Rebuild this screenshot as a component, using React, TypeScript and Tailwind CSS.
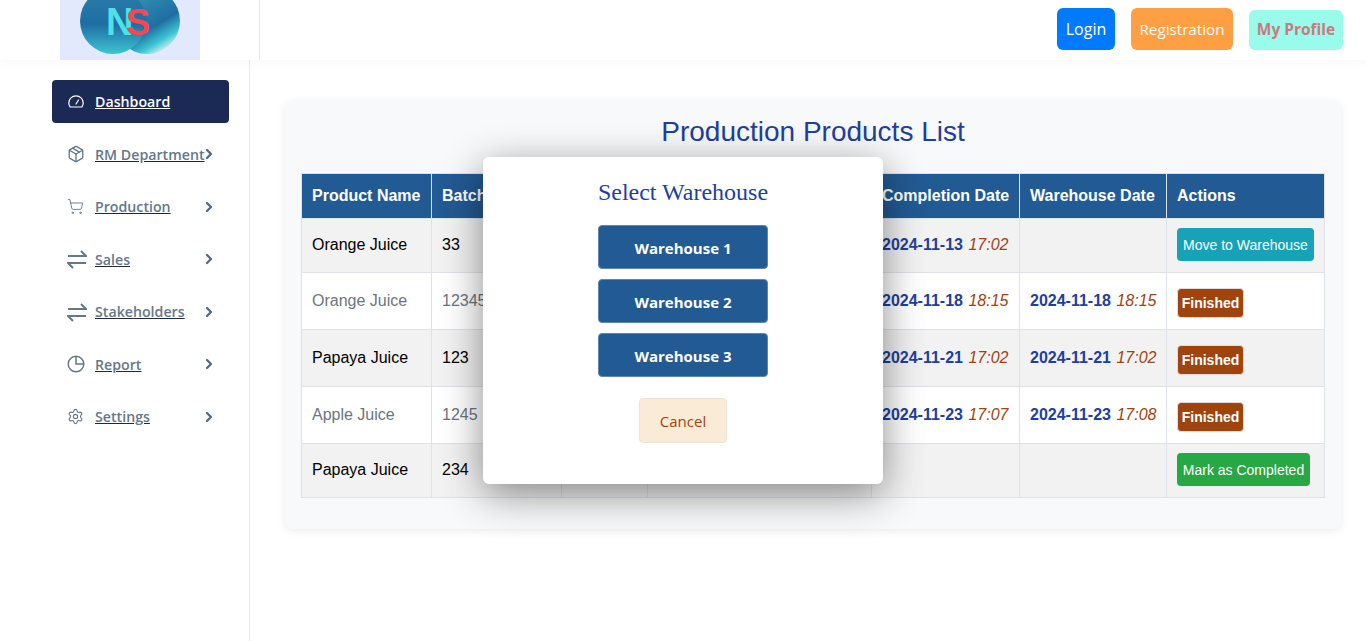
import React from "react";
import { Package, Settings, ShoppingCart, ChevronRight } from "lucide-react";

const Gauge = () => (
  <svg width="16" height="16" viewBox="0 0 16 16" fill="none" stroke="currentColor" strokeWidth="1.2">
    <path d="M2.2 13h11.6c.9-1.1 1.4-2.5 1.4-4a7.2 7.2 0 0 0-14.4 0c0 1.500.5 2.900 1.400 4z" />
    <path d="M8 10l2.500-4" strokeLinecap="round" />
  </svg>
);

const Harpoons = () => (
  <svg width="20" height="20" viewBox="0 0 20 20" fill="none" stroke="currentColor" strokeWidth="2">
    <path d="M1 7h18l-5-5" />
    <path d="M19 14H1l5 5" />
  </svg>
);

const PieClock = () => (
  <svg width="18" height="18" viewBox="0 0 18 18" fill="none" stroke="currentColor" strokeWidth="1.500">
    <circle cx="9" cy="9" r="7.800" />
    <path d="M9 1.200V9h7.800" />
  </svg>
);

const Logo = () => (
  <svg width="140" height="60" viewBox="0 0 140 60">
    <defs>
      <linearGradient id="leftDisc" x1="0" y1="0" x2="0" y2="1">
        <stop offset="0" stopColor="#2a7ea8" />
        <stop offset="0.55" stopColor="#1f6ea3" />
        <stop offset="1" stopColor="#3cc4d2" />
      </linearGradient>
      <linearGradient id="rightDisc" x1="0.1" y1="0" x2="0.7" y2="1">
        <stop offset="0" stopColor="#3aa0b8" />
        <stop offset="0.65" stopColor="#1f6ea3" />
        <stop offset="0.85" stopColor="#3cc4d2" />
        <stop offset="1" stopColor="#dff2f5" />
      </linearGradient>
    </defs>
    <rect width="140" height="60" fill="#e3e9fd" />
    <circle cx="87" cy="21" r="33" fill="url(#rightDisc)" />
    <circle cx="53" cy="21" r="33" fill="url(#leftDisc)" />
    <text y="35" fontFamily="'Liberation Sans', sans-serif" fontWeight="700" fontSize="38">
      <tspan x="46" fill="#50e0e6">N</tspan>
      <tspan x="66" fontSize="36" fill="#f9474f">S</tspan>
    </text>
  </svg>
);

const navItems = [
  { label: "RM Department", icon: <Package size={18} strokeWidth={1.800} /> },
  { label: "Production", icon: <ShoppingCart size={17} strokeWidth={1.300} /> },
  { label: "Sales", icon: <Harpoons /> },
  { label: "Stakeholders", icon: <Harpoons /> },
  { label: "Report", icon: <PieClock /> },
  { label: "Settings", icon: <Settings size={17} strokeWidth={1.600} /> },
];

const Sidebar = () => (
  <aside className="w-[250px] shrink-0 border-r border-[#e9ecef] pt-[20.250px] pl-[52px] pr-5 flex flex-col gap-[9.500px] font-['Open_Sans',sans-serif] text-[14.200px] font-semibold">
    <div className="h-[43px] rounded bg-[#1b2a55] text-white flex items-center pl-[16px]">
      <span className="w-[27px] flex"><Gauge /></span>
      <span className="underline">Dashboard</span>
    </div>
    {navItems.map((item) => (
      <div key={item.label} className="h-[43px] text-[#64788a] flex items-center pl-[15px]">
        <span className="w-[28px] flex shrink-0 justify-start">{item.icon}</span>
        <span className="w-[100px] underline decoration-[#1f2937] whitespace-nowrap">{item.label}</span>
        <ChevronRight size={16} strokeWidth={3.500} className="ml-auto mr-[12px] shrink-0 text-[#56697c]" />
      </div>
    ))}
  </aside>
);

const Header = () => (
  <header className="h-[60px] flex shadow-[0_2px_10px_rgba(0,0,0,0.03)] relative font-['Open_Sans',sans-serif] text-base">
    <div className="w-[260px] shrink-0 border-r border-[#e9ecef] pl-[60px]">
      <Logo />
    </div>
    <div className="flex-1 flex justify-end items-start gap-4 pr-[23px] pt-2">
      <button className="h-[42px] w-[58px] rounded-md bg-[#007bff] text-white">Login</button>
      <button className="h-[42px] w-[102px] rounded-md bg-[#ff9f43] text-white text-[15.200px]">Registration</button>
      <button className="h-10 w-[94px] mt-0.5 rounded-md bg-[#99fcea] text-[#c97a80] font-bold text-[15.500px]">My Profile</button>
    </div>
  </header>
);

type Row = {
  name: string;
  batch: string;
  done?: [string, string];
  stored?: [string, string];
  action: "move" | "finished" | "complete";
  height: string;
};

const rows: Row[] = [
  { name: "Orange Juice", batch: "33", done: ["2024-11-13", "17:02"], action: "move", height: "h-[54px]" },
  { name: "Orange Juice", batch: "12345", done: ["2024-11-18", "18:15"], stored: ["2024-11-18", "18:15"], action: "finished", height: "h-[57px]" },
  { name: "Papaya Juice", batch: "123", done: ["2024-11-21", "17:02"], stored: ["2024-11-21", "17:02"], action: "finished", height: "h-[57px]" },
  { name: "Apple Juice", batch: "1245", done: ["2024-11-23", "17:07"], stored: ["2024-11-23", "17:08"], action: "finished", height: "h-[57px]" },
  { name: "Papaya Juice", batch: "234", action: "complete", height: "h-[54px]" },
];

const cell = "border border-[#dee2e6] px-[10px] align-middle whitespace-nowrap";

const Stamp = ({ value }: { value?: [string, string] }) =>
  value ? (
    <span className="whitespace-nowrap">
      <span className="font-bold text-[#1e3f9e]">{value[0]}</span>{" "}
      <span className="ml-px italic text-[#a0440e]">{value[1]}</span>
    </span>
  ) : null;

const Action = ({ kind }: { kind: Row["action"] }) => {
  if (kind === "move")
    return <button className="h-[33px] w-[137px] rounded bg-[#17a2b8] text-white text-sm whitespace-nowrap">Move to Warehouse</button>;
  if (kind === "complete")
    return <button className="h-[33px] w-[133px] rounded bg-[#28a745] text-white text-sm whitespace-nowrap">Mark as Completed</button>;
  return (
    <span className="inline-flex h-[30px] w-[67px] items-center justify-center rounded border border-[#e5dcd8] bg-[#a0440e] text-white text-sm font-bold mt-1">
      Finished
    </span>
  );
};

const ProductsTable = () => (
  <table className="table-fixed border-collapse w-[1023px] font-['Liberation_Sans',sans-serif] text-base">
    <colgroup>
      <col className="w-[130px]" />
      <col className="w-[130px]" />
      <col className="w-[86px]" />
      <col className="w-[224px]" />
      <col className="w-[148px]" />
      <col className="w-[147px]" />
      <col className="w-[158px]" />
    </colgroup>
    <thead>
      <tr className="h-[45px] bg-[#225a93] text-white text-left font-bold">
        <th className={cell}>Product Name</th>
        <th className={cell}>Batch No</th>
        <th className={cell}></th>
        <th className={cell}></th>
        <th className={cell}>Completion Date</th>
        <th className={cell}>Warehouse Date</th>
        <th className={cell}>Actions</th>
      </tr>
    </thead>
    <tbody>
      {rows.map((row, i) => {
        // rows holding a full-size button sit a pixel higher
        const td = row.action === "finished" ? cell : `${cell} pb-0.5`;
        return (
          <tr key={i} className={`${row.height} ${i % 2 === 0 ? "bg-[#f2f2f2] text-black" : "bg-white text-[#6c757d]"}`}>
            <td className={td}>{row.name}</td>
            <td className={td}>{row.batch}</td>
            <td className={td}></td>
            <td className={td}></td>
            <td className={td}><Stamp value={row.done} /></td>
            <td className={td}><Stamp value={row.stored} /></td>
            <td className={td}><Action kind={row.action} /></td>
          </tr>
        );
      })}
    </tbody>
  </table>
);

const WarehouseModal = () => (
  <div className="absolute left-[483px] top-[157px] w-[400px] h-[327px] rounded-md bg-white shadow-[0_10px_40px_rgba(0,0,0,0.45)] flex flex-col items-center pt-[20px]">
    <h2 className="font-['Liberation_Serif',serif] text-[24px] leading-[30px] text-[#1e3f9e]">Select Warehouse</h2>
    <div className="mt-[18px] flex flex-col gap-[10px] font-['Open_Sans',sans-serif]">
      {["Warehouse 1", "Warehouse 2", "Warehouse 3"].map((name) => (
        <button key={name} className="h-11 w-[170px] pt-[3px] rounded bg-[#225a93] border border-[#5f87ae] text-white text-[15px] font-bold">
          {name}
        </button>
      ))}
    </div>
    <button className="mt-[21px] h-[45px] w-[88px] pt-0.5 rounded border border-[#ece4da] bg-[#faebd7] text-[#a0440e] text-[15px] font-['Open_Sans',sans-serif]">
      Cancel
    </button>
  </div>
);

export default function App() {
  return (
    <div className="relative h-[641px] w-[1366px] overflow-hidden bg-white">
      <Header />
      <div className="flex h-[581px]">
        <Sidebar />
        <main className="flex-1 pl-[35px] pr-[26px] pt-10">
          <section className="h-[429px] rounded-lg bg-[#f8f9fa] p-4 shadow-[0_2px_8px_rgba(0,0,0,0.08)]">
            <h1 className="text-center font-['Liberation_Sans',sans-serif] text-[28px] leading-[32px] text-[#1e3f9e] mb-[25px]">
              Production Products List
            </h1>
            <ProductsTable />
          </section>
        </main>
      </div>
      <WarehouseModal />
    </div>
  );
}
